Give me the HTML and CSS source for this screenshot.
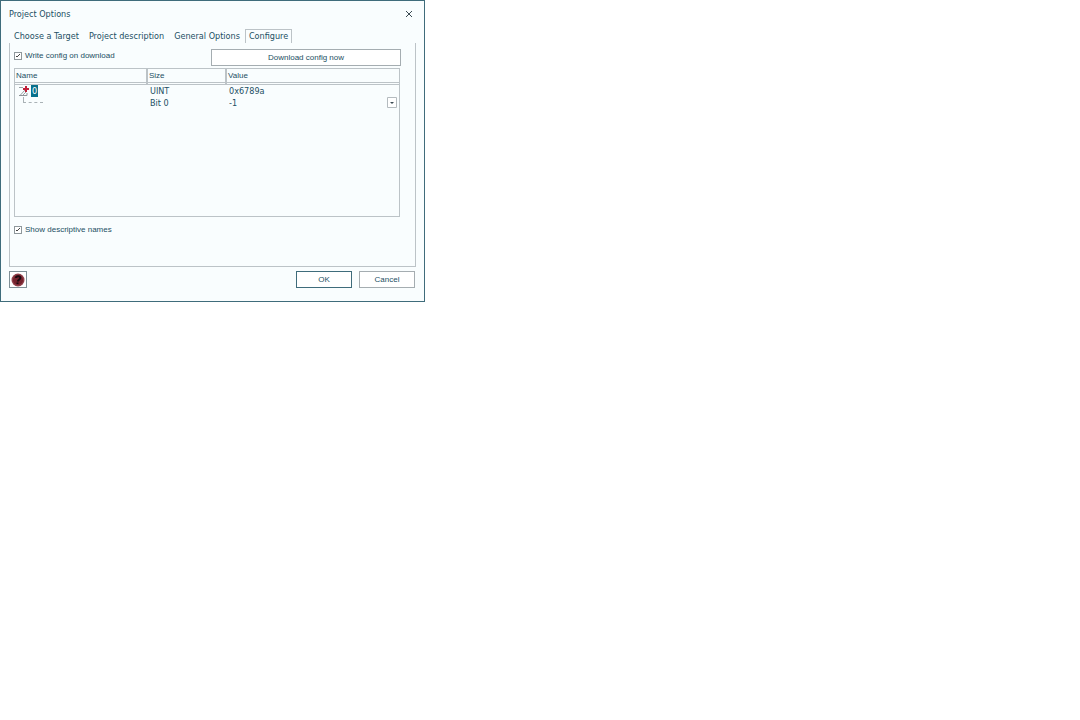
FILE: index.html
```
<!DOCTYPE html>
<html lang="en">
<head>
  <meta charset="UTF-8">
  <meta name="viewport" content="width=device-width, initial-scale=1.0">
  <title>Project Options</title>
  <link rel="stylesheet" href="styles.css">
</head>
<body>
  <div class="dialog" role="dialog" aria-labelledby="dialogTitle">
    <header class="titlebar">
      <h1 id="dialogTitle">Project Options</h1>
      <button type="button" class="close" aria-label="Close">
        <svg width="8" height="8" viewBox="0 0 8 8"><path d="M1 1l6 6M7 1L1 7" stroke="#3a4a52" fill="none"/></svg>
      </button>
    </header>

    <nav class="tabs" role="tablist">
      <button type="button" class="tab" role="tab">Choose a Target</button>
      <button type="button" class="tab" role="tab">Project description</button>
      <button type="button" class="tab" role="tab">General Options</button>
      <button type="button" class="tab active" role="tab" aria-selected="true">Configure</button>
    </nav>

    <section class="panel">
      <div class="toolbar">
        <label class="check"><input type="checkbox" checked>Write config on download</label>
        <button type="button" class="btn btn-wide">Download config now</button>
      </div>

      <div class="grid">
        <table>
          <thead>
            <tr><th class="col-name">Name</th><th class="col-size">Size</th><th>Value</th></tr>
          </thead>
          <tbody>
            <tr>
              <td>
                <div class="node">
                  <svg width="12" height="12" viewBox="0 0 12 12" fill="none">
                    <path d="M1 2.500h4M7 5L2 10.500M9 6L5 10" stroke="#9aa1a5"/>
                    <path d="M1 10.500h8V8" stroke="#8d9498"/>
                    <path d="M8 1v6M5 4h6" stroke="#c01f38" stroke-width="2"/>
                  </svg>
                  <span class="selected">0</span>
                </div>
              </td>
              <td>UINT</td>
              <td>0x6789a</td>
            </tr>
            <tr>
              <td><div class="branch"></div></td>
              <td>Bit 0</td>
              <td>
                <div class="picker">
                  <select aria-label="Bit 0 value"><option>-1</option></select>
                  <svg class="arrow" width="10" height="11" viewBox="0 0 10 11"><path d="M.5.5h9v10h-9z" fill="#fff" stroke="#b4bbbf"/><path d="M3 5h4L5 7z" fill="#3a4a52"/></svg>
                </div>
              </td>
            </tr>
          </tbody>
        </table>
      </div>

      <label class="check"><input type="checkbox" checked>Show descriptive names</label>
    </section>

    <footer class="actions">
      <button type="button" class="help" aria-label="Help">
        <svg width="14" height="14" viewBox="0 0 14 14" fill="none">
          <circle cx="7" cy="7" r="6.500" fill="#8f3d47"/>
          <circle cx="7" cy="7" r="5" fill="#74222d"/>
          <path d="M5 5c0-2.500 4.500-2.500 4.300 0C9.200 6.500 7 6.500 6.800 8.500M6.500 9.500v1.500" stroke="#1c0a10" stroke-width="2"/>
        </svg>
      </button>
      <button type="button" class="btn btn-default">OK</button>
      <button type="button" class="btn">Cancel</button>
    </footer>
  </div>
</body>
</html>
```
FILE: styles.css
```
:root {
  --frame: #3f6c7b;
  --surface: #f9fdfe;
  --line: #bcc3c7;
  --text: #234f63;
  --tahoma: Tahoma, "DejaVu Sans Condensed", "DejaVu Sans", sans-serif;
  --sans: "Liberation Sans", Arial, sans-serif;
}

* {
  box-sizing: border-box;
}

body {
  margin: 0;
  background: #fff;
  color: var(--text);
  font-family: var(--sans);
  font-size: 8px;
  line-height: 12px;
}

button,
input,
select {
  margin: 0;
  padding: 0;
  color: inherit;
  font: inherit;
}

svg {
  display: block;
  flex: none;
}

.dialog {
  max-width: 425px;
  padding: 0 8px 13px;
  border: 1px solid var(--frame);
  background: var(--surface);
}

.titlebar {
  display: flex;
  align-items: center;
  justify-content: space-between;
  height: 26px;
  margin-bottom: 2px;
  padding-right: 3px;
}

h1 {
  margin: 0;
  font: 9px/12px var(--tahoma);
}

.close {
  border: none;
  background: none;
}

.tabs {
  display: flex;
  height: 14px;
  padding-left: 5px;
  font: 9px/13px var(--tahoma);
}

.tab {
  margin-right: 10px;
  border: none;
  background: none;
  white-space: nowrap;
}

.tab.active {
  margin-left: -5px;
  padding: 0 3px;
  border: 1px solid var(--line);
  border-bottom: none;
}

.panel {
  min-height: 224px;
  padding: 6px 15px 0 4px;
  border: 1px solid var(--line);
  border-top: none;
}

.toolbar {
  display: flex;
  justify-content: space-between;
  margin-bottom: 2px;
}

.check {
  display: flex;
  align-items: center;
  gap: 3px;
  height: 14px;
}

.check input {
  width: 8px;
  height: 8px;
  appearance: none;
  border: 1px solid #8f989c;
  background: #fff url("data:image/svg+xml,%3Csvg xmlns='http://www.w3.org/2000/svg' viewBox='0 0 6 6'%3E%3Cpath d='M1 3l1 1 3-3' fill='none' stroke='%23444'/%3E%3C/svg%3E");
}

.btn {
  width: 56px;
  height: 17px;
  border: 1px solid #a5adb1;
  background: #fff;
}

.btn-wide {
  width: 190px;
  margin-right: -1px;
}

.btn-default {
  border-color: var(--frame);
}

.grid {
  height: 149px;
  margin-bottom: 6px;
  border: 1px solid var(--line);
}

table {
  width: 100%;
  table-layout: fixed;
  border-collapse: separate;
  border-spacing: 0;
}

th {
  height: 16px;
  padding: 0 1px;
  border-right: 1px solid var(--line);
  border-left: 1px solid var(--line);
  border-bottom: 3px double var(--line);
  font-weight: normal;
  text-align: left;
}

th:first-child {
  border-left: none;
}

th:last-child {
  border-right: none;
}

.col-name {
  width: 132px;
}

.col-size {
  width: 79px;
}

td {
  height: 12px;
  padding: 0 2px 0 3px;
  font: 9px/12px var(--tahoma);
}

.node {
  display: flex;
  gap: 1px;
}

.selected {
  padding: 0 1px;
  background: #08708c;
  color: #fff;
}

.branch {
  width: 20px;
  height: 6px;
  margin: 0 0 6px 5px;
  border: 1px dashed #aab2b6;
  border-width: 0 0 1px 1px;
}

.picker {
  position: relative;
}

.picker select {
  display: block;
  width: 100%;
  height: 12px;
  appearance: none;
  border: none;
  background: none;
}

.arrow {
  position: absolute;
  top: 0;
  right: 0;
  pointer-events: none;
}

.actions {
  display: flex;
  gap: 7px;
  padding: 4px 1px 0 0;
}

.help {
  width: 18px;
  height: 17px;
  margin-right: auto;
  padding: 1px;
  border: 1px solid #7f8f96;
  background: #fff;
}
```
